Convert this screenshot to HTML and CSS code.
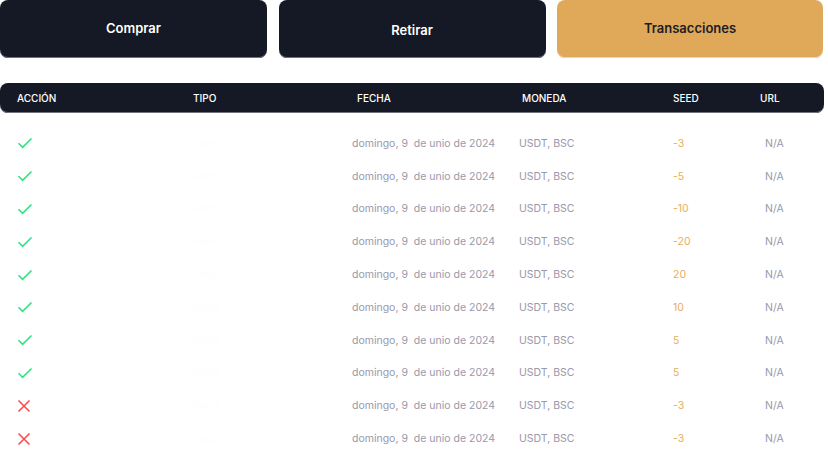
FILE: index.html
```html
<!DOCTYPE html>
<html lang="es">
<head>
<meta charset="utf-8">
<link rel="stylesheet" href="styles.css">
</head>
<body>
<div class="page">
  <div class="tabs">
    <button class="tab">Comprar</button>
    <button class="tab tab-low">Retirar</button>
    <button class="tab tab-active">Transacciones</button>
  </div>
  <div class="thead">
    <span>ACCIÓN</span><span>TIPO</span><span>FECHA</span><span>MONEDA</span><span>SEED</span><span>URL</span>
  </div>
  <div class="tbody" id="tbody"></div>
</div>
<script>
const ok = '<svg width="16" height="12" viewBox="0 0 16 12"><path d="M1.5 6.2 L5.6 10.3 L14.5 1.5" fill="none" stroke="#2ee383" stroke-width="1.6"/></svg>';
const ko = '<svg width="14" height="14" viewBox="0 0 14 14"><path d="M1.5 1.5 L12.5 12.5 M12.5 1.5 L1.5 12.5" fill="none" stroke="#ff4a4a" stroke-width="1.6"/></svg>';
const rows = [[1,'-3'],[1,'-5'],[1,'-10'],[1,'-20'],[1,'20'],[1,'10'],[1,'5'],[1,'5'],[0,'-3'],[0,'-3']];
document.getElementById('tbody').innerHTML = rows.map(r =>
  '<div class="row"><span class="c-icon">' + (r[0] ? ok : ko) + '</span>' +
  '<span class="c-tipo">Seed</span>' +
  '<span class="c-date">domingo, 9&nbsp; de unio de 2024</span>' +
  '<span class="c-coin">USDT, BSC</span>' +
  '<span class="c-seed">' + r[1] + '</span>' +
  '<span class="c-url">N/A</span></div>').join('');
</script>
</body>
</html>
```
FILE: styles.css
```css
* { box-sizing: border-box; }
html, body { margin: 0; padding: 0; background: #fff; }
body { font-family: Inter, "Noto Sans", sans-serif; }
.page { width: 824px; }
.tabs { display: grid; grid-template-columns: 267px 267px 266px; column-gap: 11.5px; }
.tab {
  height: 58px; border: none; border-radius: 8px;
  background: #151925; color: #fff;
  font-family: Inter, sans-serif; font-weight: 600; font-size: 13px;
  box-shadow: inset 0 -1px 0 #6f7280;
  padding: 0 0 2px 0; cursor: pointer;
}
.tab-low { padding: 2px 0 0 0; }
.tab-active { background: #e0a95a; color: #1c1c24; box-shadow: inset 0 -1px 0 #f0d3a6; }
.thead {
  margin-top: 25px; height: 30px; border-radius: 8px;
  background: #151925; color: #fff;
  display: grid; grid-template-columns: 176px 164px 165px 151px 87px 1fr;
  align-items: center; padding-left: 17px;
  font-size: 10px; font-weight: 500;
  box-shadow: inset 0 -1px 0 #6f7280;
}
.tbody { padding-top: 14px; }
.row {
  height: 32.8px; display: grid;
  grid-template-columns: 176px 164px 165px 151px 87px 1fr;
  align-items: center; padding-left: 17px;
  font-size: 10.5px; color: #9a98ab;
}
.c-icon { display: flex; align-items: center; }
.c-tipo { color: #fefefe; }
.c-date { margin-left: -5px; white-space: nowrap; }
.c-coin { margin-left: -3px; }
.c-seed { color: #e8ae5c; }
.c-url { margin-left: 5px; }
```
